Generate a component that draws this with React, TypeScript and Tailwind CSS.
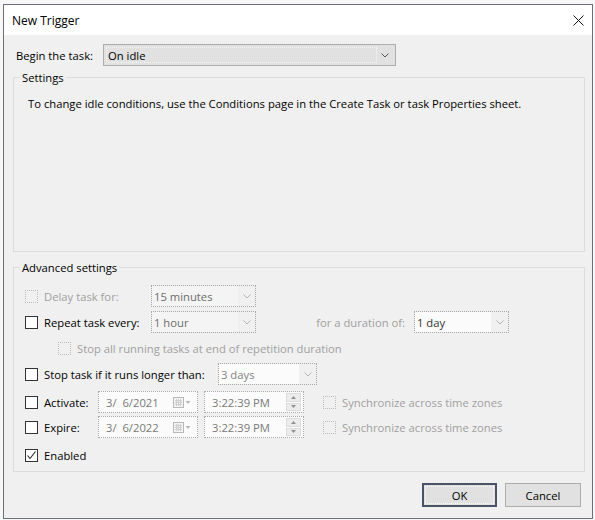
import React from 'react';

function Chevron({ color = '#606060' }: { color?: string }) {
  return (
    <svg width="8" height="5" viewBox="0 0 8 5" fill="none">
      <path d="M0.5 0.5 L4 4 L7.5 0.5" stroke={color} strokeWidth="1" />
    </svg>
  );
}

function Check({ checked = false, disabled = false }: { checked?: boolean; disabled?: boolean }) {
  return (
    <span
      className={`w-[13px] h-[13px] shrink-0 flex items-center justify-center ${
        disabled ? 'border border-dotted border-[#bcbcbc]' : 'border border-[#333333] bg-white'
      }`}
    >
      {checked && (
        <svg width="11" height="11" viewBox="0 0 11 11" fill="none">
          <path d="M1.5 5.5 L4 8.5 L9.5 1.5" stroke="#222" strokeWidth="1.1" />
        </svg>
      )}
    </span>
  );
}

function Combo({ value, width, textClass, light }: { value: string; width: string; textClass: string; light?: boolean }) {
  return (
    <div className={`${width} h-[22px] shrink-0 border border-dotted border-[#a8a8a8] flex items-center`}>
      <div className={`flex-1 h-full flex items-center pl-[2px] ${light ? 'bg-[#fbfbfb]' : 'bg-[#f4f4f4]'}`}>
        <span className={textClass}>{value}</span>
      </div>
      <div className="w-[17px] h-full flex items-center justify-center">
        <Chevron color="#b4b4b4" />
      </div>
    </div>
  );
}

function CalendarIcon() {
  return (
    <svg width="18" height="11" viewBox="0 0 18 11" fill="none">
      <rect x="0.5" y="0.5" width="10" height="10" fill="#f4f4f4" stroke="#b8b8b8" />
      <path d="M2 3.5 H9 M2 5.5 H9 M2 7.5 H9 M3.5 2 V9 M5.5 2 V9 M7.5 2 V9" stroke="#cfcfcf" strokeWidth="1" />
      <path d="M12.5 4 L17.5 4 L15 7 Z" fill="#b8b8b8" />
    </svg>
  );
}

function DateBox({ value }: { value: string }) {
  return (
    <div className="w-[100px] h-[22px] shrink-0 border border-dotted border-[#a8a8a8] bg-[#fbfbfb] flex items-center pl-[7px] pr-[6px] justify-between">
      <span className="text-[#7a7a7a] whitespace-pre">{value}</span>
      <CalendarIcon />
    </div>
  );
}

function TimeBox({ value }: { value: string }) {
  return (
    <div className="w-[100px] h-[22px] shrink-0 border border-dotted border-[#a8a8a8] bg-[#fbfbfb] flex items-center pl-[7px] pr-[2px] justify-between">
      <span className="text-[#7a7a7a]">{value}</span>
      <div className="w-[15px] h-[18px] flex flex-col gap-[1px]">
        <div className="flex-1 bg-[#ececec] border border-[#dcdcdc] flex items-center justify-center">
          <svg width="5" height="3" viewBox="0 0 5 3">
            <path d="M0 3 L2.5 0 L5 3 Z" fill="#909090" />
          </svg>
        </div>
        <div className="flex-1 bg-[#ececec] border border-[#dcdcdc] flex items-center justify-center">
          <svg width="5" height="3" viewBox="0 0 5 3">
            <path d="M0 0 L2.5 3 L5 0 Z" fill="#909090" />
          </svg>
        </div>
      </div>
    </div>
  );
}

export default function App() {
  const dim = 'text-[#a0a0a0]';

  return (
    <div className="w-[595px] h-[520px] bg-[#f7f7f7] overflow-hidden font-['Open_Sans','Segoe_UI',sans-serif] text-[11.25px] leading-[15px] text-black">
      <div className="ml-[3px] mt-[4px] w-[590px] h-[515px] border border-[#6b6f78] bg-[#f0f0f0] flex flex-col">
        {/* Title bar */}
        <div className="h-[30px] bg-white flex items-center justify-between pl-[8px] pr-[8px]">
          <span className="text-[12px]">New Trigger</span>
          <svg width="11" height="11" viewBox="0 0 11 11" fill="none">
            <path d="M0.5 0.5 L10.5 10.5 M10.5 0.5 L0.5 10.5" stroke="#111" strokeWidth="1" />
          </svg>
        </div>

        <div className="flex flex-col pl-[9px] pr-[7px]">
          {/* Begin the task */}
          <div className="mt-[9px] flex items-center h-[22px] pl-[3px]">
            <span className="w-[87px]">Begin the task:</span>
            <div className="w-[293px] h-[22px] bg-[#e1e1e1] border border-[#adadad] flex items-center p-[2px]">
              <div className="flex-1 h-full border border-dotted border-[#f6f6f6] flex items-center pl-[1px]">
                On idle
              </div>
              <div className="w-[16px] flex items-center justify-center">
                <Chevron color="#555" />
              </div>
            </div>
          </div>

          {/* Settings */}
          <fieldset className="mt-[4px] h-[182px] border border-[#dcdcdc] pl-[6px]">
            <legend className="px-[2px]">Settings</legend>
            <p className="mt-[11px] ml-[8px]">
              To change idle conditions, use the Conditions page in the Create Task or task Properties sheet.
            </p>
          </fieldset>

          {/* Advanced settings */}
          <fieldset className="mt-[8px] h-[212px] border border-[#dcdcdc] pl-[6px]">
            <legend className="px-[2px]">Advanced settings</legend>
            <div className="flex flex-col pl-[5px]">
              <div className="mt-[10px] h-[22px] flex items-center">
                <Check disabled />
                <span className={`ml-[6px] w-[107px] ${dim}`}>Delay task for:</span>
                <Combo value="15 minutes" width="w-[105px]" textClass="text-[#6d6d6d]" />
              </div>

              <div className="mt-[4px] h-[22px] flex items-center">
                <Check />
                <span className="ml-[6px] w-[107px]">Repeat task every:</span>
                <Combo value="1 hour" width="w-[105px]" textClass="text-[#6d6d6d]" />
                <span className={`w-[158px] text-right pr-[9px] ${dim}`}>for a duration of:</span>
                <Combo value="1 day" width="w-[95px]" textClass="text-[#333]" light />
              </div>

              <div className="mt-[4px] h-[22px] flex items-center pl-[33px]">
                <Check disabled />
                <span className={`ml-[6px] ${dim}`}>Stop all running tasks at end of repetition duration</span>
              </div>

              <div className="mt-[4px] h-[22px] flex items-center">
                <Check />
                <span className="ml-[6px] w-[174px]">Stop task if it runs longer than:</span>
                <Combo value="3 days" width="w-[99px]" textClass="text-[#838383]" light />
              </div>

              <div className="mt-[6px] h-[22px] flex items-center">
                <Check />
                <span className="ml-[6px] w-[54px]">Activate:</span>
                <DateBox value="3/  6/2021" />
                <div className="ml-[6px]">
                  <TimeBox value="3:22:39 PM" />
                </div>
                <div className="ml-[19px]">
                  <Check disabled />
                </div>
                <span className={`ml-[6px] ${dim}`}>Synchronize across time zones</span>
              </div>

              <div className="mt-[3px] h-[22px] flex items-center">
                <Check />
                <span className="ml-[6px] w-[54px]">Expire:</span>
                <DateBox value="3/  6/2022" />
                <div className="ml-[6px]">
                  <TimeBox value="3:22:39 PM" />
                </div>
                <div className="ml-[19px]">
                  <Check disabled />
                </div>
                <span className={`ml-[6px] ${dim}`}>Synchronize across time zones</span>
              </div>

              <div className="mt-[6px] h-[22px] flex items-center">
                <Check checked />
                <span className="ml-[6px]">Enabled</span>
              </div>
            </div>
          </fieldset>

          {/* Buttons */}
          <div className="mt-[11px] flex justify-end gap-[8px] pr-[4px]">
            <button className="w-[75px] h-[24px] bg-[#e1e1e1] border-2 border-[#4a5468] p-[1px]">
              <div className="w-full h-full border border-dotted border-[#f8f8f8] flex items-center justify-center">OK</div>
            </button>
            <button className="w-[76px] h-[24px] bg-[#e1e1e1] border border-[#adadad] flex items-center justify-center">
              Cancel
            </button>
          </div>
        </div>
      </div>
    </div>
  );
}
